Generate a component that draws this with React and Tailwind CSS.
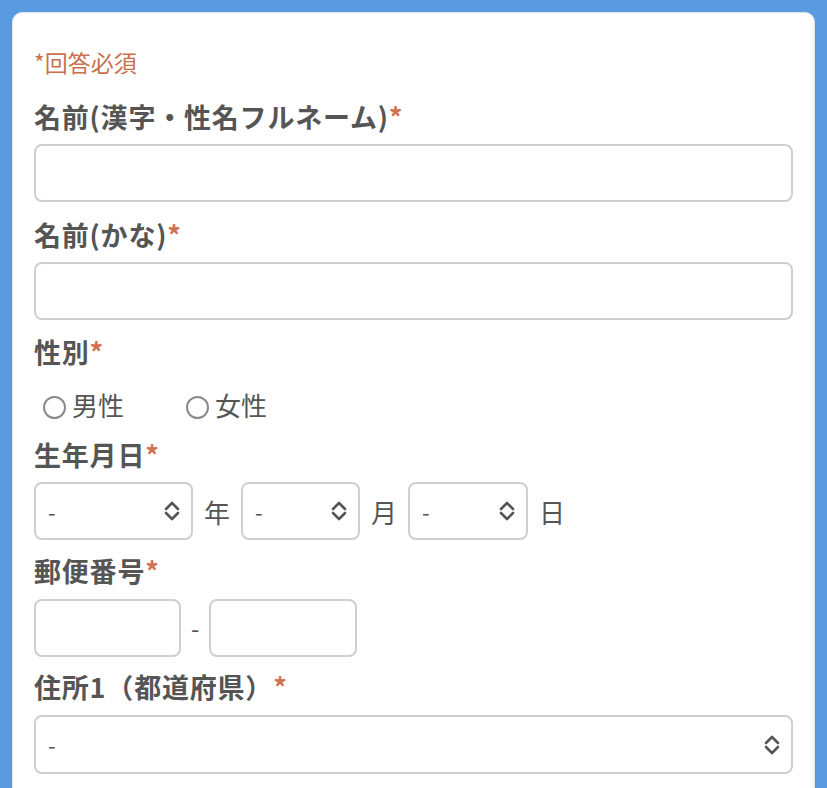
import React from 'react';

const FONT = { fontFamily: '"Noto Sans CJK JP", "Noto Sans", sans-serif' };

function Chevrons() {
    return (
        <svg width="18" height="22" viewBox="0 0 18 22" fill="none" stroke="#555" strokeWidth="2.6" strokeLinecap="round" strokeLinejoin="round">
            <path d="M3 9 L9 3 L15 9" />
            <path d="M3 13 L9 19 L15 13" />
        </svg>
    );
}

function Label({ children, className = '' }) {
    return (
        <div className={`h-[33px] leading-[33px] text-[27px] tracking-[0.8px] font-bold text-[#555] ${className}`}>
            {children}
            <span className="text-[#d27252]">*</span>
        </div>
    );
}

function TextBox({ className = '' }) {
    return <div className={`h-[58px] rounded-[8px] border-2 border-[#cfcfcf] bg-white ${className}`} />;
}

function SelectBox({ className = '' }) {
    return (
        <div className={`h-[58px] rounded-[8px] border-2 border-[#cfcfcf] bg-white flex items-center justify-between pl-[12px] pr-[10px] ${className}`}>
            <span className="text-[22px] text-[#555]">-</span>
            <Chevrons />
        </div>
    );
}

function Radio({ label }) {
    return (
        <div className="flex items-center">
            <span className="w-[23px] h-[23px] mt-[6px] rounded-full border-[2.5px] border-[#8a8a8a] bg-white" />
            <span className="ml-[6px] text-[26px] text-[#555] leading-[33px]">{label}</span>
        </div>
    );
}

export default function App() {
    return (
        <div className="w-[827px] h-[788px] bg-[#5a9ae0] overflow-hidden pt-[12px] px-[12px]" style={FONT}>
            <div className="bg-white rounded-t-[10px] border border-[#dfe6ee] h-[820px] pt-[34px] pl-[21px] pr-[21px]">
                <div className="h-[30px] leading-[30px] text-[23px] text-[#c9704f]">*回答必須</div>

                <Label className="mt-[23px]">名前(漢字・性名フルネーム)</Label>
                <TextBox className="mt-[11px]" />

                <Label className="mt-[16px]">名前(かな)</Label>
                <TextBox className="mt-[11px]" />

                <Label className="mt-[15px]">性別</Label>
                <div className="flex items-center gap-[62px] mt-[20px] h-[33px] pl-[9px]">
                    <Radio label="男性" />
                    <Radio label="女性" />
                </div>

                <Label className="mt-[17px]">生年月日</Label>
                <div className="flex items-center mt-[11px] text-[26px] text-[#555]">
                    <SelectBox className="w-[159px]" />
                    <span className="mx-[11px]">年</span>
                    <SelectBox className="w-[119px]" />
                    <span className="mx-[11px]">月</span>
                    <SelectBox className="w-[120px]" />
                    <span className="ml-[11px]">日</span>
                </div>

                <Label className="mt-[14px]">郵便番号</Label>
                <div className="flex items-center mt-[12px]">
                    <TextBox className="w-[147px]" />
                    <span className="mx-[10px] text-[24px] text-[#555]">-</span>
                    <TextBox className="w-[148px]" />
                </div>

                <Label className="mt-[13px]">住所1（都道府県）</Label>
                <SelectBox className="mt-[12px] h-[59px]" />
            </div>
        </div>
    );
}
